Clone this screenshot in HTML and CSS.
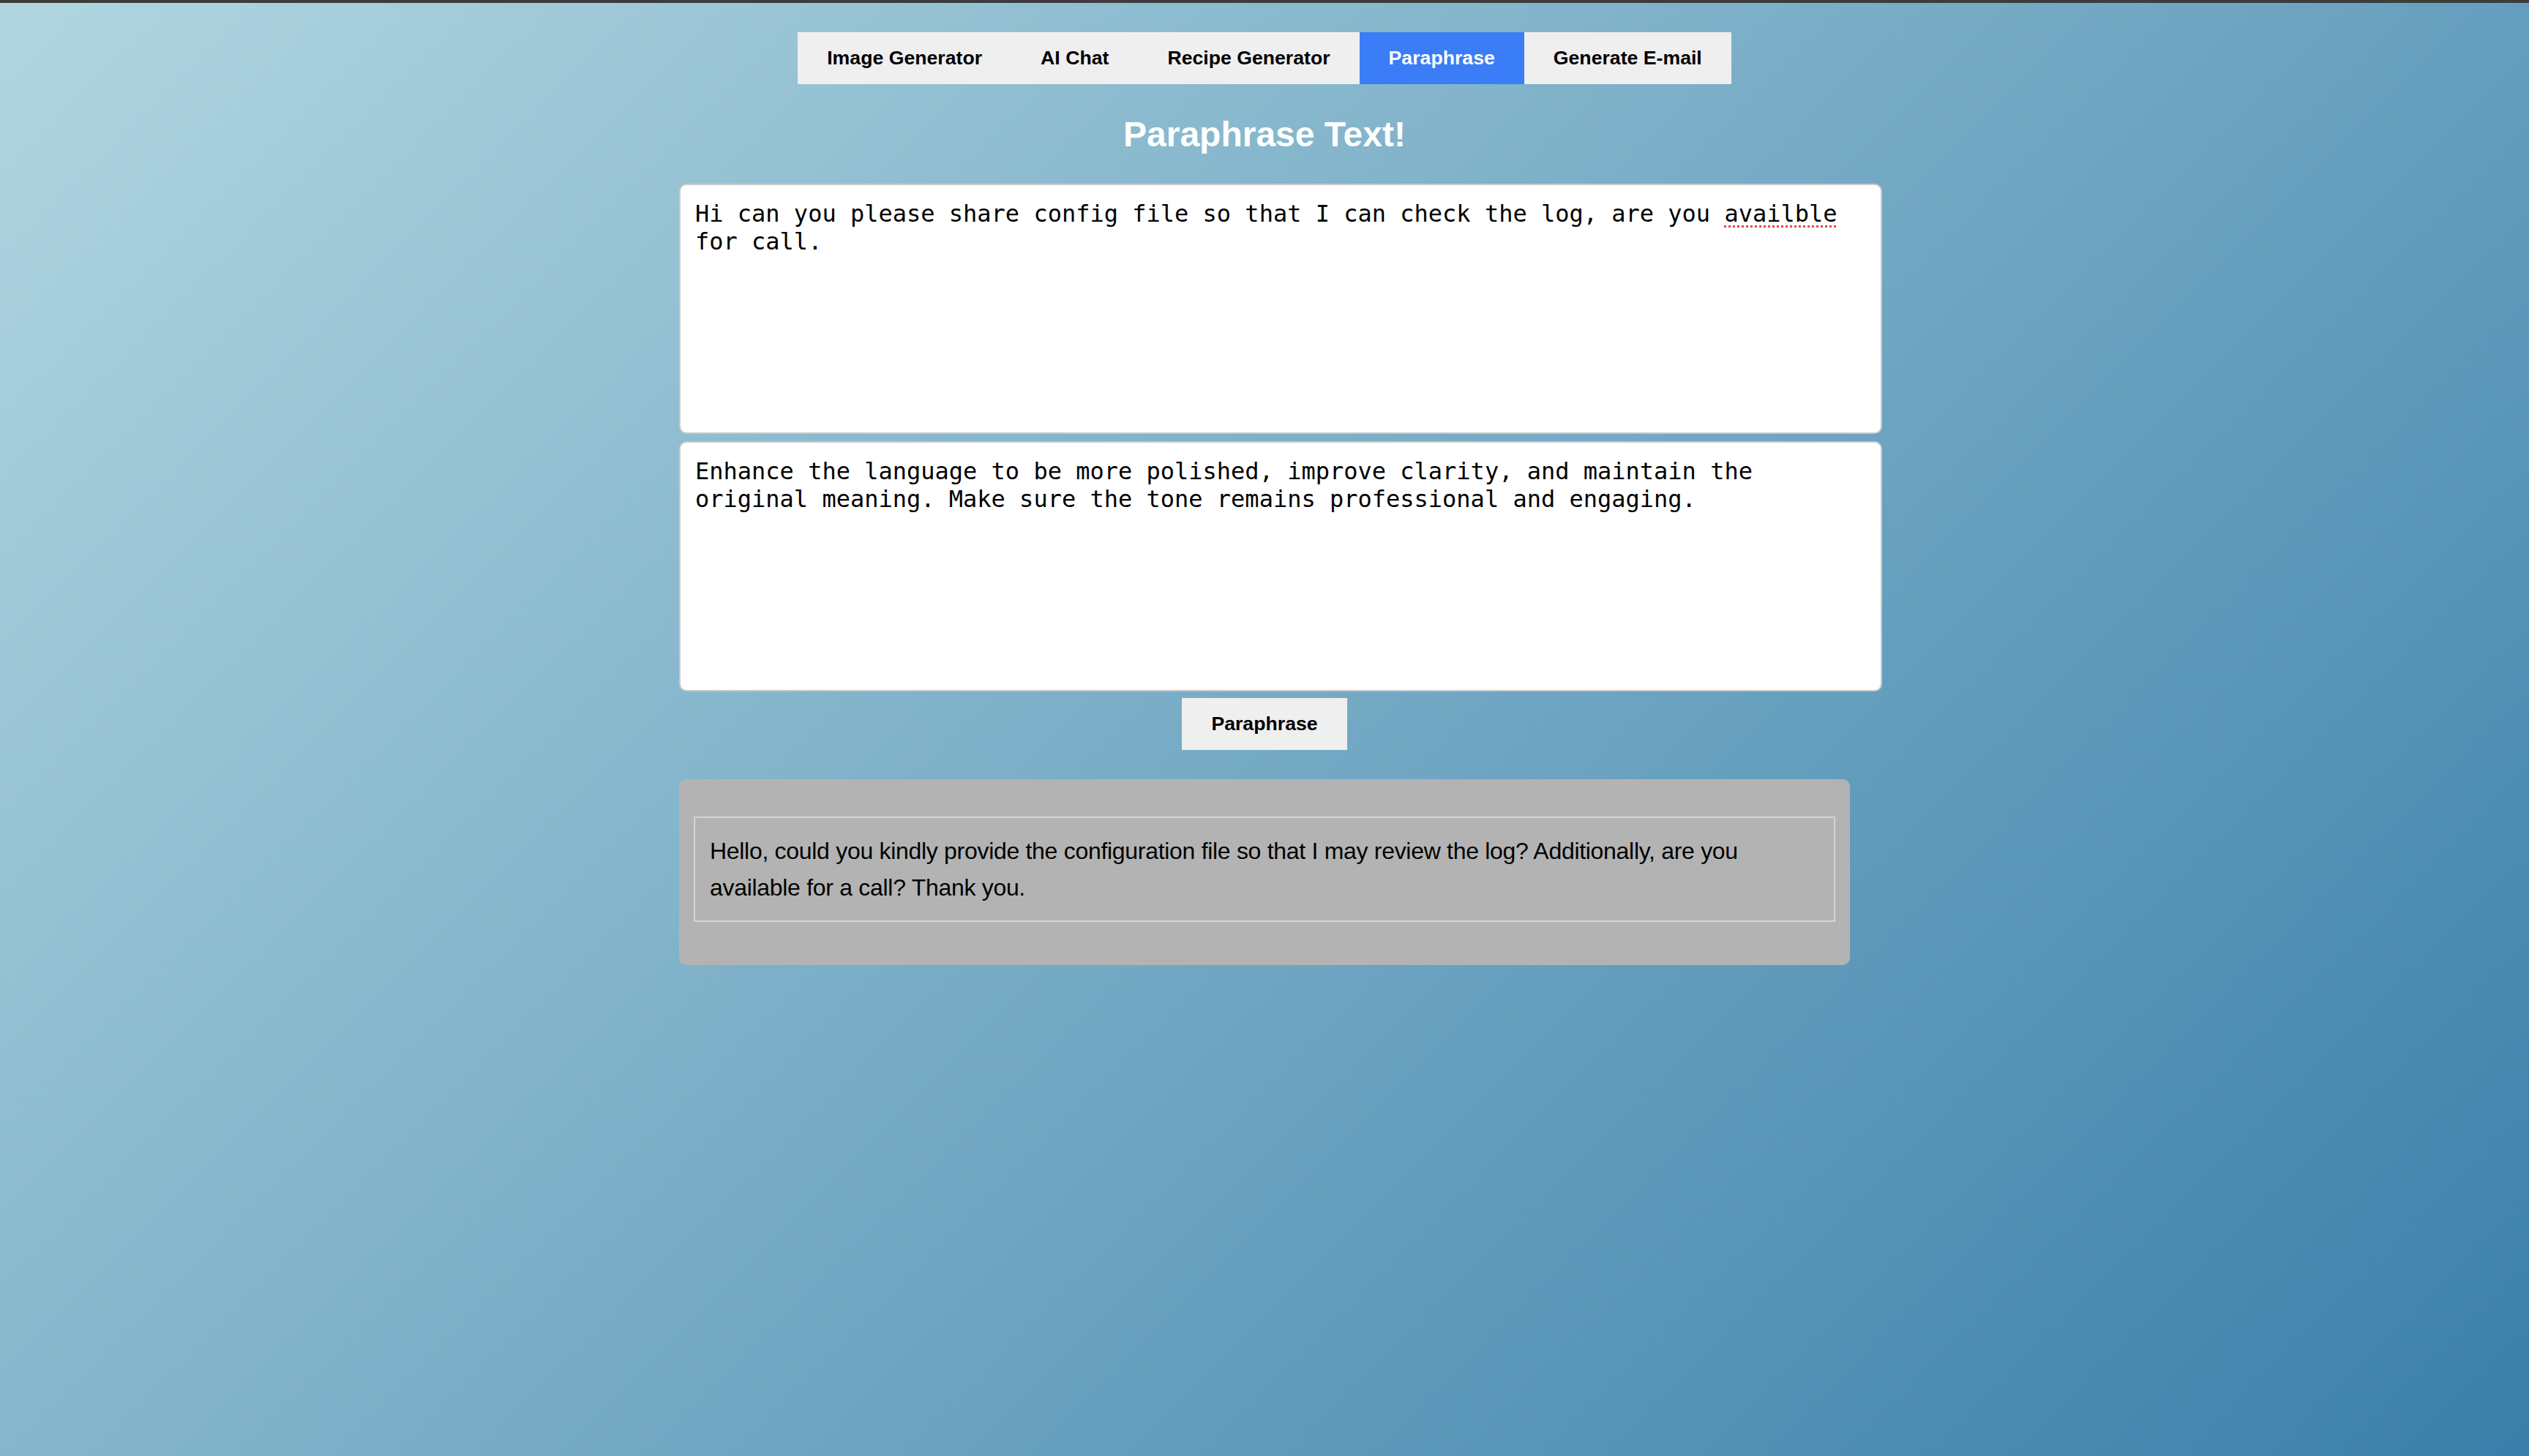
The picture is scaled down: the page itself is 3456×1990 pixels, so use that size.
FILE: index.html
```html
<!DOCTYPE html>
<html lang="en">
<head>
<meta charset="utf-8">
<title>Paraphrase Text</title>
<link rel="stylesheet" href="styles.css">
</head>
<body>
<nav class="tabs">
  <button class="tab">Image Generator</button>
  <button class="tab">AI Chat</button>
  <button class="tab">Recipe Generator</button>
  <button class="tab tab-active">Paraphrase</button>
  <button class="tab">Generate E-mail</button>
</nav>
<main class="container">
  <h2 class="title">Paraphrase Text!</h2>
  <div class="field" contenteditable="true" spellcheck="false">Hi can you please share config file so that I can check the log, are you <span class="misspelled">availble</span> for call.</div>
  <div class="field" contenteditable="true" spellcheck="false">Enhance the language to be more polished, improve clarity, and maintain the original meaning. Make sure the tone remains professional and engaging.</div>
  <div class="actions">
    <button class="submit">Paraphrase</button>
  </div>
  <section class="result">
    <div class="result-text">Hello, could you kindly provide the configuration file so that I may review the log? Additionally, are you available for a call? Thank you.</div>
  </section>
</main>
</body>
</html>
```

FILE: styles.css
```css
html {
  height: 100%;
  background: linear-gradient(135deg, #b1d6e0 0%, #3a7faa 100%);
}

body {
  margin: 0;
  min-height: 100%;
  box-sizing: border-box;
  border-top: 4px solid #3c3c3c;
  padding-top: 40px;
  font-family: "Liberation Sans", Arial, sans-serif;
}

.tabs {
  display: flex;
  justify-content: center;
}

.tab,
.submit {
  border: none;
  margin: 0;
  padding: 20px 40px;
  background: #efefef;
  color: #000;
  font-family: "Liberation Sans", Arial, sans-serif;
  font-size: 26.67px;
  font-weight: bold;
  line-height: normal;
  cursor: pointer;
}

.tab-active {
  background: #3a7df6;
  color: #fff;
}

.container {
  width: 1600px;
  margin: 0 auto;
}

.title {
  margin: 41px 0 40px;
  text-align: center;
  color: #fff;
  font-size: 48px;
  font-weight: bold;
  line-height: normal;
}

.field {
  width: 1600px;
  height: 298px;
  padding: 20px;
  border: 2px solid #c9c9c9;
  border-radius: 10px;
  background: #fff;
  color: #000;
  font-family: "DejaVu Sans Mono", "Liberation Mono", monospace;
  font-size: 32px;
  line-height: normal;
  white-space: pre-wrap;
  overflow-wrap: break-word;
  outline: none;
  margin-bottom: 10px;
}

.misspelled {
  text-decoration: underline dotted #e5483f;
  text-decoration-thickness: 3px;
  text-underline-offset: 5px;
}

.actions {
  display: flex;
  justify-content: center;
  margin-top: -1px;
}

.result {
  margin-top: 40px;
  padding: 20px;
  background: #b3b3b3;
  border-radius: 10px;
}

.result-text {
  margin: 31px 0 39px;
  padding: 20px;
  border: 2px solid #d4d4d4;
  color: #000;
  font-size: 32px;
  line-height: 50px;
  letter-spacing: -0.3px;
}
```
